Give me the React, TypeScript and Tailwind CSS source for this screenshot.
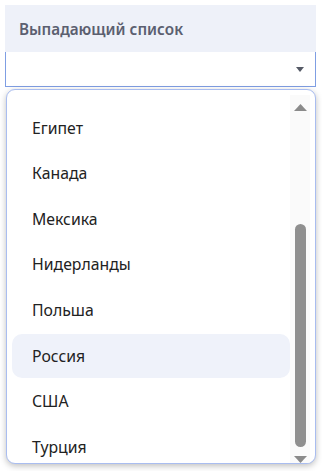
import React from "react";

const countries = ["Египет", "Канада", "Мексика", "Нидерланды", "Польша", "Россия", "США", "Турция"];

export default function App() {
  return (
    <div className="w-[322px] h-[471px] bg-white pt-[5px] px-[5px] font-['Noto_Sans',sans-serif] relative">
      {/* Header */}
      <div className="h-[47px] w-[311px] bg-[#eef1f9] flex items-center pl-[14px] pt-[1px]">
        <span className="text-[15.3px] font-semibold text-[#5b5f70]">Выпадающий список</span>
      </div>

      {/* Select input */}
      <div className="h-[35px] w-[311px] border border-t-0 border-[#7f9ee3] bg-white flex items-center justify-end pr-[11px] pt-[1px]">
        <svg width="8" height="5" viewBox="0 0 8 5">
          <path d="M0 0 L8 0 L4 5 Z" fill="#555a66" />
        </svg>
      </div>

      {/* Dropdown */}
      <div className="mt-[2px] ml-[1px] w-[310px] h-[375px] border border-[#a9bdf0] rounded-[9px] bg-white shadow-[0_2px_6px_rgba(0,0,0,0.25)] flex overflow-hidden">
        <div className="flex-1 flex flex-col pt-[16.5px] pl-[5px]">
          {countries.map((c) => (
            <div key={c} className="h-[45.6px] shrink-0">
              <div
                className={`h-[44px] flex items-center pl-[20px] rounded-[10px] text-[15.8px] text-[#222] ${
                  c === "Россия" ? "bg-[#eff2fa]" : ""
                }`}
              >
                {c}
              </div>
            </div>
          ))}
        </div>

        {/* Scrollbar */}
        <div className="w-[20px] mr-[5px] mt-[5px] bg-[#fafafa] flex flex-col items-center">
          <svg width="13" height="7" viewBox="0 0 13 7" className="mt-[9px]">
            <path d="M6.5 0 L13 7 L0 7 Z" fill="#8a8a8a" />
          </svg>
          <div className="mt-[113px] w-[11px] h-[224px] rounded-full bg-[#8f8f8f]" />
          <svg width="13" height="7" viewBox="0 0 13 7" className="mt-[9px]">
            <path d="M0 0 L13 0 L6.5 7 Z" fill="#8a8a8a" />
          </svg>
        </div>
      </div>
    </div>
  );
}
